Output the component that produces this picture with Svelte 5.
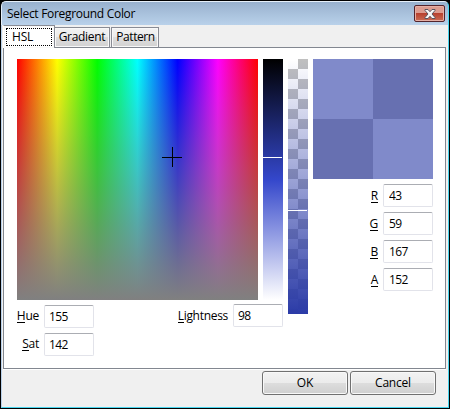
<script>
  let hue = $state(155);
  let sat = $state(142);
  let lightness = $state(98);
  const channels = [['R', 43], ['G', 59], ['B', 167], ['A', 152]];
</script>

<div class="window">
  <header>
    <span class="title">Select Foreground Color</span>
    <button class="close" aria-label="Close">
      <svg width="12" height="10" viewBox="0 0 12 10">
        <path d="M1 .5H4L6 2.7L8 .5H11V1.5L8 5L11 8.5V9.5H8L6 7.3L4 9.5H1V8.5L4 5L1 1.5Z" fill="#f8f8f8" stroke="#59545f" stroke-width="1" />
      </svg>
    </button>
  </header>
  <div class="client">
    <nav>
      <div class="tab active"><span>HSL</span></div>
      <div class="tab gradient"><span>Gradient</span></div>
      <div class="tab pattern"><span>Pattern</span></div>
    </nav>
    <main>
      <section class="pickers">
        <div class="row">
          <div class="spectrum">
            <svg class="cross" width="20" height="20"><path d="M0 10.5H20M10.5 0V20" stroke="#000" /></svg>
          </div>
          <div class="light"><i></i></div>
        </div>
        <div class="fields">
          <div class="hs">
            <label><span class="hue"><u>H</u>ue</span><input value={hue} /></label>
            <label><span class="sat"><u>S</u>at</span><input value={sat} /></label>
          </div>
          <label class="lum"><span class="ln"><u>L</u>ightness</span><input value={lightness} /></label>
        </div>
      </section>
      <div class="alpha"><i></i></div>
      <section class="side">
        <div class="preview"></div>
        {#each channels as [name, value]}
          <label><span><u>{name}</u></span><input {value} /></label>
        {/each}
      </section>
    </main>
    <footer>
      <button class="ok"><span>OK</span></button>
      <button class="cancel"><span>Cancel</span></button>
    </footer>
  </div>
</div>

<style>
  :global(body) { margin: 0; background: #000; }
  * { box-sizing: border-box; }
  .window {
    width: 450px; height: 409px; padding: 1px;
    background: #000; font: 12px/16px "Open Sans", "Noto Sans", sans-serif; color: #000;
    display: flex; flex-direction: column; letter-spacing: -.3px;
  }
  header {
    height: 24px; display: flex; align-items: flex-start; justify-content: space-between;
    padding: 4px 3px 0 5px; border: 1px solid #e5eff9; border-right-color: #49d5ee; border-bottom: 0;
    border-radius: 5px 5px 0 0; background: linear-gradient(#98b1ce, #b9d1ea);
  }
  .title { white-space: nowrap; letter-spacing: -.3px; }
  .close {
    width: 31px; height: 17px; margin-top: -1px; padding: 0; display: flex; align-items: center; justify-content: center;
    border: 1px solid #53242c; border-radius: 2px; box-shadow: inset 0 0 0 1px #e6afa5;
    background: linear-gradient(#dd9c90 0 45%, #b8412f 50%, #cb6d55);
  }
  .client {
    flex: 1; background: #f0f0f0; border: solid; border-width: 0 1px 1px 1px;
    border-color: #b9d1ea #49d5ee #49d5ee #b9d1ea; padding: 0 2px 0 1px; display: flex; flex-direction: column;
  }
  nav { height: 22px; display: flex; align-items: flex-end; position: relative; z-index: 1; }
  .tab {
    height: 20px; border: 1px solid #898c95; border-bottom: 0; padding-top: 1px; text-align: center;
    background: linear-gradient(#f3f3f3, #ebebeb 50%, #dddddd 50%, #d2d2d2); box-shadow: inset 0 0 0 1px #f8f8f8;
    white-space: nowrap;
  }
  .tab.gradient { width: 55px; border-left: 0; }
  .tab.pattern { width: 48px; margin-left: 1px; padding-left: 1px; letter-spacing: -.4px; }
  .tab.active {
    width: 52px; height: 23px; margin-bottom: -1px; padding: 2px; background: #fff; border-left-color: #fff;
  }
  .active span { display: block; height: 18px; border: 1px dotted #000; text-align: left; padding-left: 5px; line-height: 15px; letter-spacing: -.2px; }
  main {
    height: 322px; border: 1px solid #828790; background: #fff; display: flex; align-items: flex-start;
    padding: 11px 10px 0 13px;
  }
  .pickers { width: 266px; margin-right: 5px; }
  .row { display: flex; gap: 5px; }
  .spectrum {
    width: 241px; height: 241px; position: relative;
    background: linear-gradient(to bottom, rgba(128,128,128,0), rgb(128,128,128)),
      linear-gradient(to right, #f00, #ff0, #0f0, #0ff, #00f, #f0f, #f00);
  }
  .cross { position: absolute; left: 145px; top: 88px; }
  .light {
    width: 20px; height: 241px; position: relative;
    background: linear-gradient(#000, #3447cb 50%, #fff);
  }
  .light i, .alpha i { position: absolute; left: 0; width: 19px; height: 1px; background: #fff; }
  .light i { top: 98px; }
  .alpha i { top: 151px; }
  .alpha {
    width: 20px; height: 255px; position: relative; margin-right: 5px;
    background: linear-gradient(rgba(43,59,167,0), rgb(43,59,167)),
      repeating-conic-gradient(#c0c0c0 0 25%, #fff 0 50%) 0 0 / 20px 20px;
  }
  .fields { display: flex; justify-content: space-between; padding-top: 4px; }
  .hs { display: flex; flex-direction: column; gap: 5px; padding-top: 1px; width: 77px; }
  label { height: 23px; display: flex; justify-content: flex-end; align-items: center; gap: 5px; }
  label span { white-space: nowrap; letter-spacing: -.25px; }
  .hs span { padding-bottom: 1px; }
  .ln { letter-spacing: -.3px; }
  u { text-decoration: none; box-shadow: 0 1px #000; display: inline-block; line-height: 13px; }
  input {
    width: 50px; height: 23px; padding: 0 0 1px 5px; font: inherit; letter-spacing: -.6px;
    border: 1px solid #e2e3ea; border-top-color: #abadb3; border-radius: 2px; background: #fff; color: #000; outline: none;
  }
  .fields input { padding-left: 4px; }
  .side { width: 120px; display: flex; flex-direction: column; gap: 5px; }
  .preview {
    height: 120px;
    background: repeating-conic-gradient(#6770b1 0 25%, #808aca 0 50%);
  }
  footer { display: flex; justify-content: flex-end; gap: 2px; padding: 1px 10px 0 0; border-top: 1px solid #fff; }
  footer button {
    width: 86px; height: 24px; padding: 0; font: inherit; letter-spacing: -.2px; color: #000; border: 1px solid #707070; border-radius: 3px;
    box-shadow: inset 0 0 0 1px #f8f8f8; background: linear-gradient(#f2f2f2, #ebebeb 50%, #dddddd 50%, #cfcfcf);
  }
</style>
